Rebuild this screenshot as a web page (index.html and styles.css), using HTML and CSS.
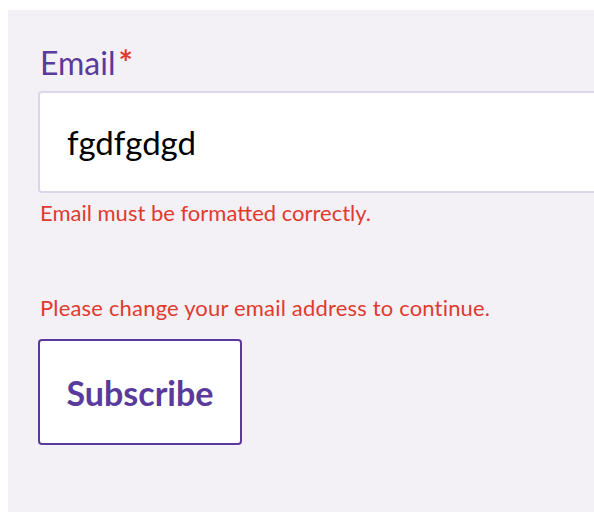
FILE: index.html
```html
<!DOCTYPE html>
<html lang="en">
<head>
<meta charset="utf-8">
<title>Subscribe</title>
<link rel="stylesheet" href="styles.css">
</head>
<body>
<form class="panel">
  <label class="label" for="email">Email<span class="req">*</span></label>
  <input class="field" id="email" type="text" value="fgdfgdgd">
  <p class="error">Email must be formatted correctly.</p>
  <p class="error notice">Please change your email address to continue.</p>
  <button class="btn" type="button">Subscribe</button>
</form>
</body>
</html>
```
FILE: styles.css
```css
html, body {
  background: #ffffff;
}
body {
  margin: 10px 0 10px 8px;
  font-family: Lato, "Open Sans", sans-serif;
}
.panel {
  display: flex;
  flex-direction: column;
  align-items: flex-start;
  box-sizing: border-box;
  height: 502px;
  padding: 32px 0 0 30px;
  background: #f3f1f6;
  overflow: hidden;
}
.label {
  display: block;
  font-size: 32px;
  line-height: 40px;
  color: #5a3a9a;
  padding-left: 2px;
  margin-bottom: 8px;
}
.req {
  color: #e03a2f;
  margin-left: 3px;
  font-weight: 700;
  font-size: 34px;
}
.field {
  box-sizing: border-box;
  width: 620px;
  height: 102px;
  margin: 0;
  padding: 0 0 0 27px;
  border: 2px solid #dcd6ea;
  border-radius: 4px;
  background: #ffffff;
  font-family: inherit;
  font-size: 33px;
  color: #000000;
  outline: none;
}
.error {
  margin: 6px 0 0 2px;
  font-size: 22px;
  line-height: 28px;
  color: #e03a2f;
}
.notice {
  margin-top: 67px;
  letter-spacing: 0.18px;
}
.btn {
  box-sizing: border-box;
  width: 204px;
  height: 106px;
  margin-top: 17px;
  padding: 0;
  border: 2px solid #5a3a9a;
  border-radius: 4px;
  background: #ffffff;
  font-family: inherit;
  font-size: 34px;
  font-weight: 700;
  color: #5a3a9a;
  cursor: pointer;
}
```
